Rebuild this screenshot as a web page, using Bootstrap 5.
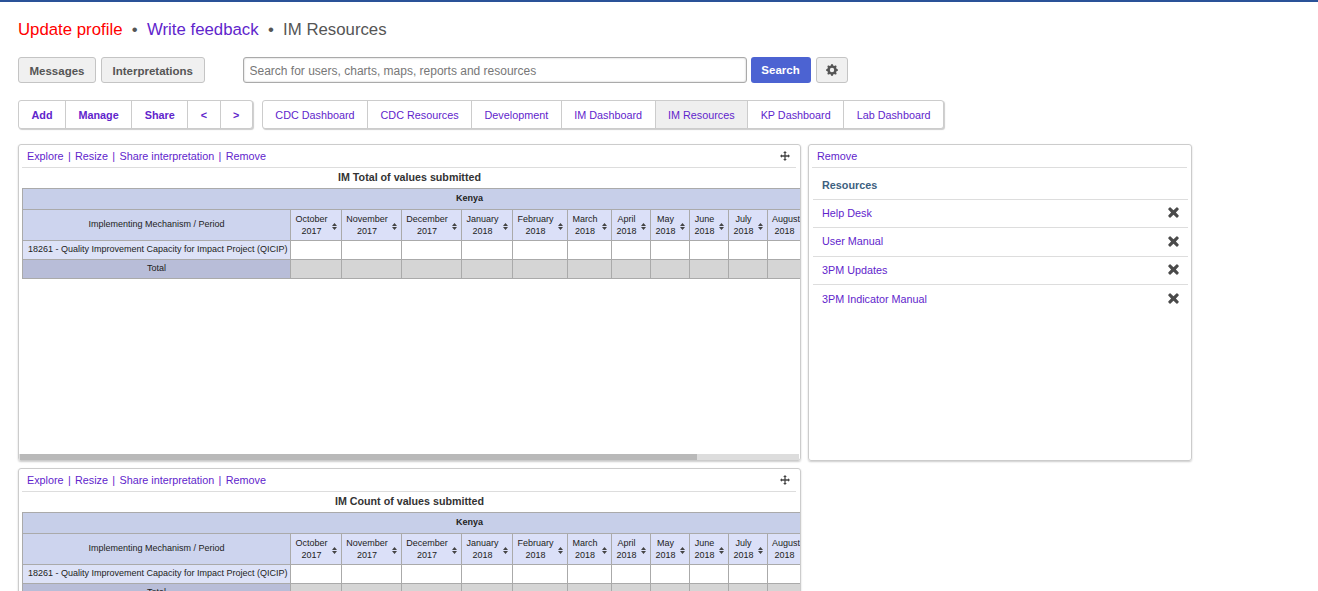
<!DOCTYPE html>
<html lang="en">

<head>
  <meta charset="UTF-8" />
  <meta name="viewport" content="width=device-width, initial-scale=1.0" />
  <title>IM Resources</title>
  <link href="https://cdn.jsdelivr.net/npm/bootstrap@5.3.0/dist/css/bootstrap.min.css" rel="stylesheet" />
  <style>
    html {
      overflow: hidden;
    }

    body {
      font-family: "Liberation Sans", Arial, sans-serif;
      font-size: 10.8px;
      color: #333;
      background: #fff;
      border-top: 2px solid #2a5298;
      padding: 0 18px;
    }

    a {
      color: #5f25cc;
      text-decoration: none;
    }

    .page-crumbs {
      height: 55px;
      padding-top: 18px;
      font-size: 16.8px;
      line-height: 20px;
      color: #555;
    }

    .page-crumbs .dot {
      margin: 0 9.3px;
    }

    .crumb-red {
      color: #f00;
    }

    .tool-row {
      height: 26px;
      margin-bottom: 17px;
    }

    .tool-btn {
      height: 26px;
      padding: 1px 10.5px 0;
      font-size: 11.5px;
      font-weight: 700;
      line-height: 24px;
      color: #555;
      background: #f0f0f0;
      border: 1px solid #c4c4c4;
      border-radius: 3px;
    }

    .tool-gap {
      margin-right: 5px;
    }

    .search-box {
      width: 504px;
      height: 26px;
      margin-left: 38px;
      padding: 1px 5px 0 6px;
      font-size: 12px;
      border: 1px solid #aaa;
      border-radius: 3px;
      box-shadow: inset 0 0 2px #bbb;
    }

    .search-box::placeholder {
      color: #777;
      opacity: 1;
    }

    .search-btn {
      height: 26px;
      width: 60px;
      margin-left: 4px;
      padding: 1px 0 0;
      font-size: 11.5px;
      font-weight: 700;
      color: #fff;
      background: #4c63d2;
      border: 0;
      border-radius: 3px;
    }

    .gear-btn {
      width: 32px;
      margin-left: 5px;
      padding: 0;
    }

    .gear-btn svg {
      display: block;
      margin: auto;
    }

    .tab-row {
      height: 29px;
      margin-bottom: 15px;
    }

    .tab-box {
      display: flex;
      height: 29px;
      background: #fff;
      border: 1px solid #ccc;
      border-radius: 3px;
      box-shadow: 1px 1px 1px #ccc;
    }

    .tab-box a {
      padding: 0 12.5px;
      font-size: 10.8px;
      line-height: 28px;
      border-right: 1px solid #ccc;
    }

    .tab-box a:last-child {
      border-right: 0;
    }

    .tab-box a.on {
      background: #efefef;
    }

    .tab-actions {
      margin-right: 9px;
    }

    .tab-actions a {
      font-weight: 700;
    }

    .panel-wrap {
      width: 1174px;
      gap: 7px;
    }

    .panel-left {
      width: 783px;
      gap: 7px;
    }

    .panel-item {
      border: 1px solid #ccc;
      border-radius: 3px;
      box-shadow: 0 1px 2px #ccc;
    }

    .panel-right {
      width: 384px;
      height: 317px;
    }

    .panel-head {
      height: 23px;
      margin: 0 4px 0 3px;
      padding: 0 6px 0 5px;
      line-height: 23px;
      border-bottom: 1px solid #ddd;
    }

    .panel-head .sep {
      margin: 0 4.3px;
      color: #5f25cc;
    }

    .panel-title {
      height: 20px;
      font-size: 10.7px;
      font-weight: 700;
      line-height: 19px;
      text-align: center;
      color: #333;
    }

    .table-scroll {
      height: 266px;
      padding-left: 3px;
      overflow: hidden;
    }

    .scroll-track {
      height: 6px;
      margin: 0 1px 0 0;
      background: #ddd;
    }

    .scroll-thumb {
      height: 6px;
      margin-left: 1px;
      background: #b9b9b9;
    }

    .pivot {
      width: 894px;
      table-layout: fixed;
      border-collapse: collapse;
      font-size: 9px;
      line-height: 12px;
      color: #222;
    }

    .pivot td,
    .pivot th {
      position: relative;
      padding: 0 2px 2px;
      text-align: center;
      font-weight: 400;
      border: 1px solid #aaa;
    }

    .pivot .row-a {
      height: 21px;
    }

    .pivot .row-b {
      height: 31px;
    }

    .pivot .row-c {
      height: 19px;
    }

    .pivot .top-cell {
      font-weight: 700;
      background: #c7cfe9;
    }

    .pivot .dim-cell {
      background: #cdd4ee;
    }

    .pivot .month-cell {
      padding: 0 11px 1px 2px;
      background: #dbe0f8;
    }

    .pivot .label-cell {
      text-align: left;
      padding-left: 5px;
      background: #dde2f7;
      white-space: nowrap;
    }

    .pivot .total-label {
      background: #b8bdd8;
    }

    .pivot .total-cell {
      background: #d5d5d5;
    }

    .sort-mark {
      position: absolute;
      top: 13px;
      right: 4px;
    }

    .col-w0 { width: 268px; }
    .col-w1 { width: 51px; }
    .col-w2 { width: 60px; }
    .col-w3 { width: 60px; }
    .col-w4 { width: 51px; }
    .col-w5 { width: 55px; }
    .col-w6 { width: 44px; }
    .col-w7 { width: 39px; }
    .col-w8 { width: 39px; }
    .col-w9 { width: 39px; }
    .col-w10 { width: 39px; }
    .col-w11 { width: 149px; }

    .res-list .list-group-item {
      margin: 0 3px 0 4px;
      padding: 0 9px;
      height: 28.5px;
      line-height: 27.5px;
      font-size: 10.8px;
      border-color: #ddd;
      border-width: 0 0 1px;
    }

    .res-list .res-head {
      height: 31.9px;
      line-height: 35px;
      font-weight: 700;
      color: #3d5f80;
    }

    .res-list svg {
      margin-top: -2px;
    }
  </style>
</head>

<body>

  <div class="page-crumbs">
    <a class="crumb-red" href="#">Update profile</a><span class="dot">•</span><a href="#">Write feedback</a><span class="dot">•</span><span>IM Resources</span>
  </div>

  <div class="tool-row d-flex">
    <button class="tool-btn tool-gap">Messages</button>
    <button class="tool-btn">Interpretations</button>
    <input class="search-box" type="text" placeholder="Search for users, charts, maps, reports and resources" />
    <button class="search-btn">Search</button>
    <button class="tool-btn gear-btn">
      <svg width="12" height="12" viewBox="0 0 16 16" fill="#555"><path d="M9.405 1.05c-.413-1.4-2.397-1.4-2.81 0l-.1.34a1.464 1.464 0 0 1-2.105.872l-.31-.17c-1.283-.698-2.686.705-1.987 1.987l.169.311c.446.82.023 1.841-.872 2.105l-.34.1c-1.4.413-1.4 2.397 0 2.81l.34.1a1.464 1.464 0 0 1 .872 2.105l-.17.31c-.698 1.283.705 2.686 1.987 1.987l.311-.169a1.464 1.464 0 0 1 2.105.872l.1.34c.413 1.4 2.397 1.4 2.81 0l.1-.34a1.464 1.464 0 0 1 2.105-.872l.31.17c1.283.698 2.686-.705 1.987-1.987l-.169-.311a1.464 1.464 0 0 1 .872-2.105l.34-.1c1.4-.413 1.4-2.397 0-2.81l-.34-.1a1.464 1.464 0 0 1-.872-2.105l.17-.31c.698-1.283-.705-2.686-1.987-1.987l-.311.169a1.464 1.464 0 0 1-2.105-.872l-.1-.34zM8 10.93a2.929 2.929 0 1 1 0-5.858 2.929 2.929 0 0 1 0 5.858z"/></svg>
    </button>
  </div>

  <div class="tab-row d-flex">
    <div class="tab-box tab-actions">
      <a href="#">Add</a><a href="#">Manage</a><a href="#">Share</a><a href="#">&lt;</a><a href="#">&gt;</a>
    </div>
    <div class="tab-box">
      <a href="#">CDC Dashboard</a><a href="#">CDC Resources</a><a href="#">Development</a><a href="#">IM Dashboard</a><a class="on" href="#">IM Resources</a><a href="#">KP Dashboard</a><a href="#">Lab Dashboard</a>
    </div>
  </div>

  <div class="panel-wrap d-flex align-items-start">
    <div class="panel-left d-flex flex-column" id="panels"></div>

    <div class="panel-item panel-right">
      <div class="panel-head"><a href="#">Remove</a></div>
      <ul class="list-group list-group-flush res-list" id="resources">
        <li class="list-group-item res-head">Resources</li>
      </ul>
    </div>
  </div>

  <script>
    const months = ['October 2017', 'November 2017', 'December 2017', 'January 2018', 'February 2018', 'March 2018', 'April 2018', 'May 2018', 'June 2018', 'July 2018'];
    const sortIcon = '<svg class="sort-mark" width="5" height="7" viewBox="0 0 5 7" fill="#444"><path d="M2.5 0 5 3H0zM0 4h5L2.5 7z"/></svg>';
    const moveIcon = '<svg width="10" height="10" viewBox="0 0 11 11" fill="#444"><path d="M5.5 0 7.5 2.2H6.2V4.8H8.8V3.5L11 5.5 8.8 7.5V6.2H6.2V8.8H7.5L5.5 11 3.5 8.8H4.8V6.2H2.2V7.5L0 5.5 2.2 3.5V4.8H4.8V2.2H3.5z"/></svg>';
    const closeIcon = '<svg width="11" height="11" viewBox="0 0 11 11" fill="#4a4a4a"><path d="M2.6.6 5.5 3.2 8.4.6a.8.8 0 0 1 1.1 0l1 1a.8.8 0 0 1 0 1.1L7.9 5.5l2.6 2.8a.8.8 0 0 1 0 1.1l-1 1a.8.8 0 0 1-1.1 0L5.5 7.8l-2.9 2.6a.8.8 0 0 1-1.1 0l-1-1a.8.8 0 0 1 0-1.1l2.6-2.8L.5 2.7a.8.8 0 0 1 0-1.1l1-1a.8.8 0 0 1 1.1 0z"/></svg>';

    function panelHtml(title) {
      let cols = '<col class="col-w0">', heads = '', blanks = '', totals = '';
      months.forEach((m, i) => {
        const parts = m.split(' ');
        cols += `<col class="col-w${i + 1}">`;
        heads += `<th class="month-cell">${parts[0]}<br>${parts[1]}${sortIcon}</th>`;
        blanks += '<td></td>';
        totals += '<td class="total-cell"></td>';
      });
      // August is the last column, cut off by the panel edge like the reference
      cols += '<col class="col-w11">';
      heads += '<th class="month-cell text-start ps-1">August<br>&nbsp;2018</th>';
      blanks += '<td></td>';
      totals += '<td class="total-cell"></td>';
      return `
        <div class="panel-item">
          <div class="panel-head d-flex justify-content-between align-items-center">
            <span><a href="#">Explore</a><span class="sep">|</span><a href="#">Resize</a><span class="sep">|</span><a href="#">Share interpretation</a><span class="sep">|</span><a href="#">Remove</a></span>
            ${moveIcon}
          </div>
          <div class="panel-title">${title}</div>
          <div class="table-scroll">
            <table class="pivot">
              <colgroup>${cols}</colgroup>
              <tr class="row-a"><th class="top-cell" colspan="12">Kenya</th></tr>
              <tr class="row-b"><th class="dim-cell">Implementing Mechanism / Period</th>${heads}</tr>
              <tr class="row-c"><td class="label-cell">18261 - Quality Improvement Capacity for Impact Project (QICIP)</td>${blanks}</tr>
              <tr class="row-c"><td class="total-label">Total</td>${totals}</tr>
            </table>
          </div>
          <div class="scroll-track"><div class="scroll-thumb" style="width: 677px"></div></div>
        </div>`;
    }

    document.getElementById('panels').innerHTML =
      panelHtml('IM Total of values submitted') +
      panelHtml('IM Count of values submitted');

    ['Help Desk', 'User Manual', '3PM Updates', '3PM Indicator Manual'].forEach(name => {
      const li = document.createElement('li');
      li.className = 'list-group-item d-flex justify-content-between align-items-center';
      li.innerHTML = `<a href="#">${name}</a>${closeIcon}`;
      document.getElementById('resources').appendChild(li);
    });
  </script>
</body>

</html>
